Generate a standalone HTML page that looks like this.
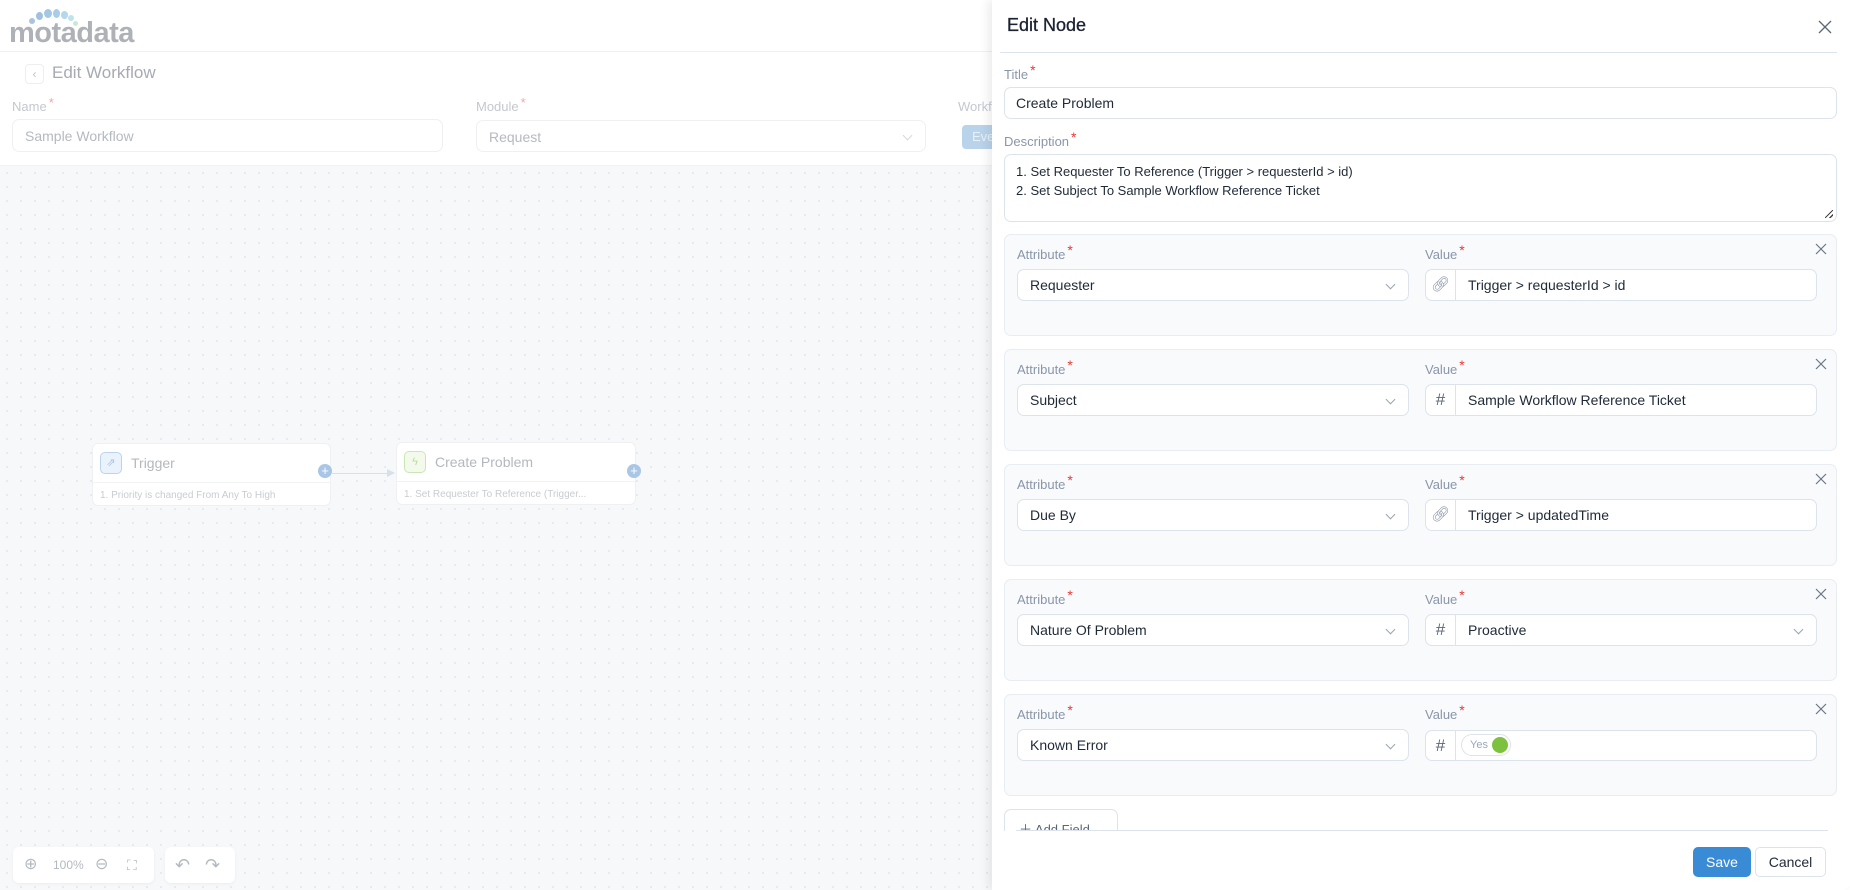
<!DOCTYPE html>
<html><head><meta charset="utf-8">
<style>
*{box-sizing:border-box;margin:0;padding:0}
body{width:1850px;height:890px;overflow:hidden;position:relative;background:#fff;font-family:"Liberation Sans",sans-serif;}
.a{position:absolute}
.canvas{left:0;top:166px;width:992px;height:724px;background-color:#f6f8fa;background-image:radial-gradient(#e6e9ee 1px,transparent 1.2px);background-size:14px 14px}
.lbl{font-size:13px;color:#8a96a8}
.lbl b{color:#e53935;font-weight:normal;font-size:14px;position:relative;top:-4px;margin-left:2px}
.inp{border:1px solid #dde3ea;border-radius:7px;background:#fff;font-size:14px;color:#1f2a37}
.fl{font-size:13px;color:#c4c8cf}
.fl b{color:#f2a8a6;font-weight:normal;position:relative;top:-4px;margin-left:2px}
.fin{border:1px solid #eef0f3;border-radius:7px;background:#fff;font-size:14px;color:#b5b9c0;padding-left:12px;line-height:32px}
.card{left:1004px;width:833px;height:102px;border:1px solid #e8edf2;border-radius:7px;background:#f8fafc}
.chev{position:absolute;right:14px;top:11px;width:7px;height:7px;border-right:1px solid #9aa4b2;border-bottom:1px solid #9aa4b2;transform:rotate(45deg)}
.x{position:absolute;width:12px;height:12px}
.pre{position:absolute;left:0;top:0;width:30px;height:100%;border-right:1px solid #dde3ea;color:#5b6777;text-align:center;line-height:30px;font-size:17px}
</style></head><body>
<!-- left header -->
<div class="a" style="left:9px;top:17px;font-size:29px;font-weight:bold;color:#aeb2b7;letter-spacing:-0.5px">motadata</div>
<div class="a" style="left:29px;top:18px;width:6px;height:6px;border-radius:50%;background:#a9c4dd"></div>
<div class="a" style="left:36px;top:12px;width:7px;height:8px;border-radius:50%;background:#a0c2df"></div>
<div class="a" style="left:44px;top:9px;width:8px;height:9px;border-radius:50%;background:#a3c8e5"></div>
<div class="a" style="left:53px;top:9px;width:7px;height:9px;border-radius:50%;background:#a7cde8"></div>
<div class="a" style="left:61px;top:11px;width:7px;height:8px;border-radius:50%;background:#b3d7ec"></div>
<div class="a" style="left:68px;top:15px;width:6px;height:6px;border-radius:50%;background:#bfe3ea"></div>
<div class="a" style="left:73px;top:21px;width:5px;height:5px;border-radius:50%;background:#c8ead6"></div>
<div class="a" style="left:0;top:51px;width:992px;height:1px;background:#eef0f3"></div>
<div class="a" style="left:25px;top:64px;width:19px;height:20px;border:1px solid #eceef1;border-radius:4px;color:#c0c4ca;font-size:12px;text-align:center;line-height:18px">‹</div>
<div class="a" style="left:52px;top:63px;font-size:17px;color:#a6abb2">Edit Workflow</div>
<div class="a fl" style="left:12px;top:99px">Name<b>*</b></div>
<div class="a fin" style="left:12px;top:119px;width:431px;height:33px">Sample Workflow</div>
<div class="a fl" style="left:476px;top:99px">Module<b>*</b></div>
<div class="a fin" style="left:476px;top:120px;width:450px;height:32px">Request<span class="chev" style="border-color:#d4d8de"></span></div>
<div class="a fl" style="left:958px;top:99px">Workflow</div>
<div class="a" style="left:962px;top:125px;width:40px;height:24px;background:#b9d3ea;border-radius:4px;color:#e9f1f9;font-size:13px;line-height:24px;padding-left:10px">Eve</div>
<div class="a" style="left:0;top:165px;width:992px;height:1px;background:#f0f2f5"></div>
<div class="a canvas"></div>
<!-- nodes -->
<div class="a" style="left:92px;top:443px;width:239px;height:63px;background:#fff;border:1px solid #eef0f3;border-radius:6px">
 <div class="a" style="left:7px;top:8px;width:22px;height:22px;border:1px solid #bcd3ee;background:#eaf2fb;border-radius:5px;color:#a9c3e2;font-size:11px;text-align:center;line-height:20px">⇗</div>
 <div class="a" style="left:38px;top:11px;font-size:14px;color:#b4b8be">Trigger</div>
 <div class="a" style="left:0;top:38px;width:100%;height:1px;background:#f0f2f4"></div>
 <div class="a" style="left:7px;top:46px;font-size:10px;color:#c8ccd2">1. Priority is changed From Any To High</div>
</div>
<div class="a" style="left:318px;top:464px;width:14px;height:14px;border-radius:50%;background:#a9c6e6;color:#fff;font-size:13px;text-align:center;line-height:14px">+</div>
<div class="a" style="left:332px;top:473px;width:55px;height:1px;background:#d8e0ea"></div>
<div class="a" style="left:387px;top:469px;width:0;height:0;border-left:8px solid #d8e0ea;border-top:4px solid transparent;border-bottom:4px solid transparent"></div>
<div class="a" style="left:396px;top:442px;width:240px;height:63px;background:#fff;border:1px solid #eef0f3;border-radius:6px">
 <div class="a" style="left:7px;top:8px;width:22px;height:22px;border:1px solid #cbe6b5;background:#f3faec;border-radius:5px;color:#b8dca0;font-size:11px;text-align:center;line-height:20px">ϟ</div>
 <div class="a" style="left:38px;top:11px;font-size:14px;color:#b4b8be">Create Problem</div>
 <div class="a" style="left:0;top:38px;width:100%;height:1px;background:#f0f2f4"></div>
 <div class="a" style="left:7px;top:46px;font-size:10px;color:#c8ccd2">1. Set Requester To Reference (Trigger...</div>
</div>
<div class="a" style="left:627px;top:464px;width:14px;height:14px;border-radius:50%;background:#a9c6e6;color:#fff;font-size:13px;text-align:center;line-height:14px">+</div>
<!-- toolbar -->
<div class="a" style="left:13px;top:847px;width:141px;height:36px;background:#fff;border-radius:6px;box-shadow:0 1px 3px rgba(0,0,0,.05);color:#b4b9c0;font-size:12px;line-height:36px">
 <span class="a" style="left:11px;font-size:16px">⊕</span><span class="a" style="left:40px">100%</span><span class="a" style="left:82px;font-size:16px">⊖</span><span class="a" style="left:114px;font-size:14px">⛶</span></div>
<div class="a" style="left:165px;top:847px;width:70px;height:36px;background:#fff;border-radius:6px;box-shadow:0 1px 3px rgba(0,0,0,.05);color:#b4b9c0;font-size:18px;line-height:36px">
 <span class="a" style="left:10px">↶</span><span class="a" style="left:40px">↷</span></div>
<!-- panel -->
<div class="a" style="left:992px;top:0;width:858px;height:890px;background:#fff;box-shadow:-4px 0 10px rgba(0,0,0,.08);border-radius:0 0 8px 0"></div>
<div class="a" style="left:1007px;top:15px;font-size:18px;color:#1a2230;-webkit-text-stroke:0.3px #1a2230">Edit Node</div>
<svg class="x" style="left:1818px;top:20px;width:14px;height:14px" viewBox="0 0 14 14"><path d="M1 1L13 13M13 1L1 13" stroke="#5b6777" stroke-width="1.3"/></svg>
<div class="a" style="left:1000px;top:52px;width:837px;height:1px;background:#dde3ea"></div>
<div class="a lbl" style="left:1004px;top:66px">Title<b>*</b></div>
<div class="a inp" style="left:1004px;top:87px;width:833px;height:32px;padding-left:11px;line-height:30px">Create Problem</div>
<div class="a lbl" style="left:1004px;top:133px">Description<b>*</b></div>
<div class="a inp" style="left:1004px;top:154px;width:833px;height:68px;padding:7px 11px;font-size:13px;line-height:19px">1. Set Requester To Reference (Trigger &gt; requesterId &gt; id)<br>2. Set Subject To Sample Workflow Reference Ticket
 <div class="a" style="right:3px;bottom:3px;width:8px;height:8px;background:linear-gradient(135deg,transparent 45%,#444 45%,#444 55%,transparent 55%,transparent 75%,#444 75%,#444 85%,transparent 85%)"></div></div>

<!-- cards -->
<div class="a card" style="top:234px"></div>
<div class="a card" style="top:349px"></div>
<div class="a card" style="top:464px"></div>
<div class="a card" style="top:579px"></div>
<div class="a card" style="top:694px"></div>

<svg class="x" style="left:1815px;top:243px" viewBox="0 0 12 12"><path d="M1 1L11 11M11 1L1 11" stroke="#6b7686" stroke-width="1.2"/></svg>
<svg class="x" style="left:1815px;top:358px" viewBox="0 0 12 12"><path d="M1 1L11 11M11 1L1 11" stroke="#6b7686" stroke-width="1.2"/></svg>
<svg class="x" style="left:1815px;top:473px" viewBox="0 0 12 12"><path d="M1 1L11 11M11 1L1 11" stroke="#6b7686" stroke-width="1.2"/></svg>
<svg class="x" style="left:1815px;top:588px" viewBox="0 0 12 12"><path d="M1 1L11 11M11 1L1 11" stroke="#6b7686" stroke-width="1.2"/></svg>
<svg class="x" style="left:1815px;top:703px" viewBox="0 0 12 12"><path d="M1 1L11 11M11 1L1 11" stroke="#6b7686" stroke-width="1.2"/></svg>

<!-- card rows -->
<div class="a lbl" style="left:1017px;top:246px">Attribute<b>*</b></div><div class="a lbl" style="left:1425px;top:246px">Value<b>*</b></div>
<div class="a inp" style="left:1017px;top:269px;width:392px;height:32px;padding-left:12px;line-height:30px">Requester<span class="chev"></span></div>
<div class="a inp" style="left:1425px;top:269px;width:392px;height:32px;padding-left:42px;line-height:30px">Trigger &gt; requesterId &gt; id<span class="pre" style="font-size:15px;color:#8a96a8">🔗︎</span></div>

<div class="a lbl" style="left:1017px;top:361px">Attribute<b>*</b></div><div class="a lbl" style="left:1425px;top:361px">Value<b>*</b></div>
<div class="a inp" style="left:1017px;top:384px;width:392px;height:32px;padding-left:12px;line-height:30px">Subject<span class="chev"></span></div>
<div class="a inp" style="left:1425px;top:384px;width:392px;height:32px;padding-left:42px;line-height:30px">Sample Workflow Reference Ticket<span class="pre">#</span></div>

<div class="a lbl" style="left:1017px;top:476px">Attribute<b>*</b></div><div class="a lbl" style="left:1425px;top:476px">Value<b>*</b></div>
<div class="a inp" style="left:1017px;top:499px;width:392px;height:32px;padding-left:12px;line-height:30px">Due By<span class="chev"></span></div>
<div class="a inp" style="left:1425px;top:499px;width:392px;height:32px;padding-left:42px;line-height:30px">Trigger &gt; updatedTime<span class="pre" style="font-size:15px;color:#8a96a8">🔗︎</span></div>

<div class="a lbl" style="left:1017px;top:591px">Attribute<b>*</b></div><div class="a lbl" style="left:1425px;top:591px">Value<b>*</b></div>
<div class="a inp" style="left:1017px;top:614px;width:392px;height:32px;padding-left:12px;line-height:30px">Nature Of Problem<span class="chev"></span></div>
<div class="a inp" style="left:1425px;top:614px;width:392px;height:32px;padding-left:42px;line-height:30px">Proactive<span class="pre">#</span><span class="chev"></span></div>

<div class="a lbl" style="left:1017px;top:706px">Attribute<b>*</b></div><div class="a lbl" style="left:1425px;top:706px">Value<b>*</b></div>
<div class="a inp" style="left:1017px;top:729px;width:392px;height:32px;padding-left:12px;line-height:30px">Known Error<span class="chev"></span></div>
<div class="a inp" style="left:1425px;top:730px;width:392px;height:31px"><span class="pre">#</span>
 <div class="a" style="left:35px;top:3px;width:50px;height:22px;border:1px solid #dde3ea;border-radius:11px;font-size:11px;color:#9aa8bb;line-height:20px;padding-left:8px">Yes<div class="a" style="left:30px;top:2px;width:16px;height:16px;border-radius:50%;background:#7cc23e"></div></div></div>

<div class="a" style="left:1004px;top:809px;width:114px;height:22px;border:1px solid #dde3ea;border-bottom:none;border-radius:7px 7px 0 0;overflow:hidden;font-size:13px;color:#5b6777;padding:9px 0 0 14px">＋ Add Field</div>
<div class="a" style="left:992px;top:831px;width:858px;height:59px;background:#fff;border-radius:0 0 8px 0"></div>
<div class="a" style="left:1016px;top:830px;width:812px;height:1px;background:#dde3ea"></div>
<div class="a" style="left:1693px;top:847px;width:58px;height:30px;background:#3a8bd6;border-radius:5px;color:#fff;font-size:14px;text-align:center;line-height:30px">Save</div>
<div class="a" style="left:1755px;top:847px;width:71px;height:30px;border:1px solid #dde3ea;border-radius:5px;color:#1f2a37;font-size:14px;text-align:center;line-height:28px">Cancel</div>
</body></html>
